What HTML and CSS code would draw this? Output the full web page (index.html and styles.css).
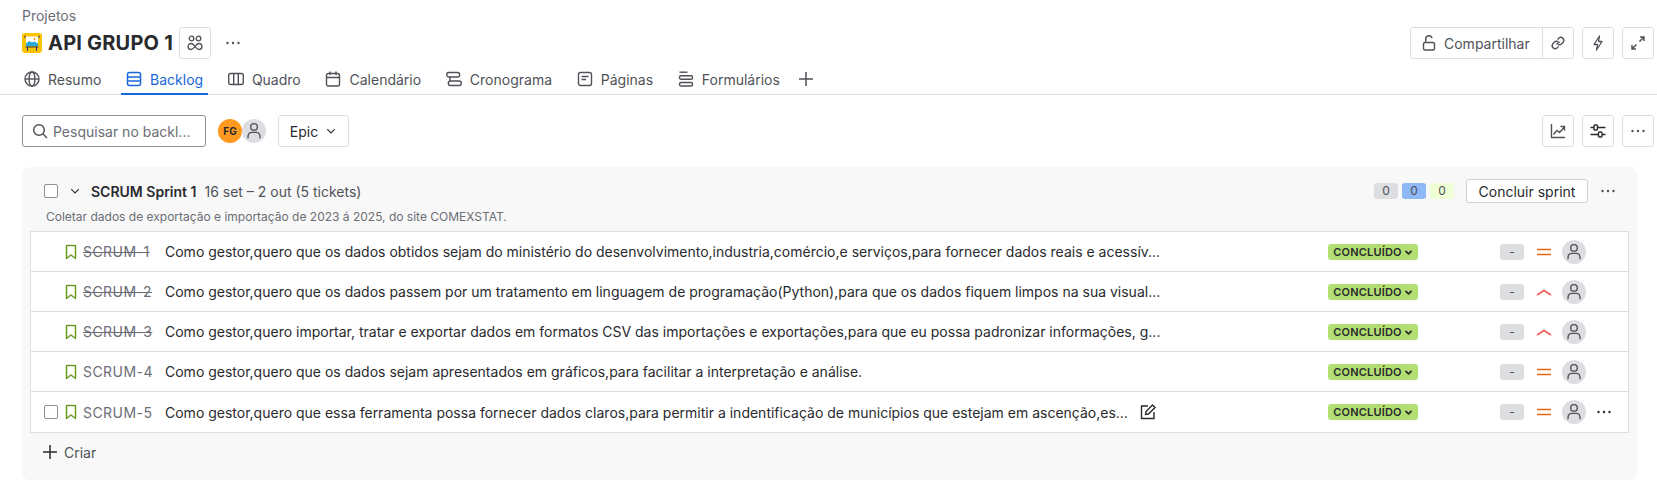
FILE: index.html
```html
<!DOCTYPE html>
<html lang="pt">
<head>
    <meta charset="UTF-8">
    <title>API GRUPO 1 - Backlog</title>
    <link rel="stylesheet" href="styles.css">
</head>
<body>
    <svg class="sprite" width="0" height="0">
        <symbol id="i-person" viewBox="0 0 24 24">
            <circle cx="12" cy="7.500" r="3.600" fill="none" stroke="currentColor" stroke-width="1.500"/>
            <path d="M5.500 20v-2.500a4 4 0 0 1 4-4h5a4 4 0 0 1 4 4V20" fill="none" stroke="currentColor" stroke-width="1.500"/>
        </symbol>
        <symbol id="i-dots" viewBox="0 0 16 16">
            <circle cx="2.500" cy="8" r="1.200" fill="currentColor"/>
            <circle cx="8" cy="8" r="1.200" fill="currentColor"/>
            <circle cx="13.500" cy="8" r="1.200" fill="currentColor"/>
        </symbol>
        <symbol id="i-chevron" viewBox="0 0 16 16">
            <path d="M3 5.500l5 5 5-5" fill="none" stroke="currentColor" stroke-width="1.500"/>
        </symbol>
        <symbol id="i-chevron-bold" viewBox="0 0 16 16">
            <path d="M2.500 5l5.500 5.500L13.500 5" fill="none" stroke="currentColor" stroke-width="3"/>
        </symbol>
        <symbol id="i-bookmark" viewBox="0 0 12 16">
            <path d="M1.500 1.500h9v13L6 11l-4.500 3.500z" fill="none" stroke="currentColor" stroke-width="1.500" stroke-linejoin="round"/>
        </symbol>
        <symbol id="i-equal" viewBox="0 0 16 16">
            <path d="M1 5.500h14M1 10.500h14" fill="none" stroke="#e56910" stroke-width="1.600"/>
        </symbol>
        <symbol id="i-high" viewBox="0 0 16 16">
            <path d="M1 11l7-4.500 7 4.500" fill="none" stroke="#f15b50" stroke-width="1.600"/>
        </symbol>
    </svg>

    <header class="page-head">
        <div class="crumb">Projetos</div>
        <div class="title-row">
            <div class="title-left">
                <svg class="project-icon" viewBox="0 0 20 20">
                    <rect width="20" height="20" rx="3" fill="#ffc400"/>
                    <rect x="4" y="3.500" width="12" height="9.500" fill="#fff"/>
                    <path d="M4 10.500l3-2.500 3 1.500 2-1 4 2v2.500H4z" fill="#2aa7dc"/>
                    <circle cx="12.500" cy="6" r="1" fill="#ff8b00"/>
                    <path d="M3 2.500V5M17 2.500V5M3.500 14h13M5.500 13.500V18M14.500 13.500V18" stroke="#253858" stroke-width="1" fill="none"/>
                </svg>
                <h1 class="title">API GRUPO 1</h1>
                <button class="icon-btn">
                    <svg class="ic" viewBox="0 0 16 16" fill="none" stroke="currentColor" stroke-width="1.300">
                        <circle cx="4.500" cy="3.500" r="2.300"/>
                        <circle cx="11.500" cy="3.500" r="2.300"/>
                        <path d="M4 8.500a3 3 0 1 0 0 6c2 0 3-1.500 4-3s2-3 4-3a3 3 0 1 1 0 6c-2 0-3-1.500-4-3s-2-3-4-3z"/>
                    </svg>
                </button>
                <svg class="ic dots-plain"><use href="#i-dots"/></svg>
            </div>
            <div class="title-actions">
                <div class="share-group">
                    <button class="share-btn">
                        <svg class="ic" viewBox="0 0 16 16" fill="none" stroke="currentColor" stroke-width="1.400">
                            <rect x="2.500" y="7.500" width="11" height="7.500" rx="1.500"/>
                            <path d="M4.700 7.500V4a3.200 3.200 0 0 1 6.300-.8"/>
                        </svg>
                        Compartilhar
                    </button>
                    <button class="share-link">
                        <svg class="ic" viewBox="0 0 16 16" fill="none" stroke="currentColor" stroke-width="1.400">
                            <path d="M6.500 9.500l3-3"/>
                            <path d="M7.500 4.500l1.500-1.500a3 3 0 0 1 4.200 4.200l-1.700 1.700a3 3 0 0 1-3.300.6"/>
                            <path d="M8.500 11.500L7 13a3 3 0 0 1-4.200-4.200l1.700-1.700a3 3 0 0 1 3.300-.6"/>
                        </svg>
                    </button>
                </div>
                <button class="icon-btn">
                    <svg class="ic" viewBox="0 0 16 16" fill="none" stroke="currentColor" stroke-width="1.300" stroke-linejoin="round">
                        <path d="M9.500 1L4 9.500h3.500L6.500 15 12 6.500H8.500z"/>
                    </svg>
                </button>
                <button class="icon-btn">
                    <svg class="ic" viewBox="0 0 16 16" fill="none" stroke="currentColor" stroke-width="1.500">
                        <path d="M10 2h4v4M14 2L9.500 6.500M6 14H2v-4M2 14l4.500-4.500"/>
                    </svg>
                </button>
            </div>
        </div>
        <nav class="tabs">
            <a class="tab">
                <svg class="ic" viewBox="0 0 16 16" fill="none" stroke="currentColor" stroke-width="1.400">
                    <circle cx="8" cy="8" r="7"/>
                    <ellipse cx="8" cy="8" rx="3" ry="7"/>
                    <path d="M1 8h14"/>
                </svg>
                Resumo
            </a>
            <a class="tab tab-active">
                <svg class="ic" viewBox="0 0 16 16" fill="none" stroke="currentColor" stroke-width="1.500">
                    <rect x="1.500" y="1.500" width="13" height="13" rx="2"/>
                    <path d="M1.500 6h13M1.500 10h13"/>
                </svg>
                Backlog
            </a>
            <a class="tab">
                <svg class="ic" viewBox="0 0 16 16" fill="none" stroke="currentColor" stroke-width="1.400">
                    <rect x="0.700" y="2.500" width="14.600" height="11" rx="2"/>
                    <path d="M5.700 2.500v11M10.300 2.500v11"/>
                </svg>
                Quadro
            </a>
            <a class="tab">
                <svg class="ic" viewBox="0 0 16 16" fill="none" stroke="currentColor" stroke-width="1.400">
                    <rect x="1.500" y="2.500" width="13" height="12.500" rx="2"/>
                    <path d="M1.500 6.500h13M5 .5v3.500M11 .5v3.500"/>
                </svg>
                Calendário
            </a>
            <a class="tab">
                <svg class="ic" viewBox="0 0 16 16" fill="none" stroke="currentColor" stroke-width="1.400">
                    <rect x="0.700" y="1.500" width="13" height="4.500" rx="2.200"/>
                    <rect x="2.300" y="10" width="13" height="4.500" rx="2.200"/>
                    <path d="M4 6v4"/>
                </svg>
                Cronograma
            </a>
            <a class="tab">
                <svg class="ic" viewBox="0 0 16 16" fill="none" stroke="currentColor" stroke-width="1.400">
                    <rect x="1.500" y="1.500" width="13" height="13" rx="2"/>
                    <path d="M4.500 5.500h7M4.500 8.500h4.500"/>
                </svg>
                Páginas
            </a>
            <a class="tab">
                <svg class="ic" viewBox="0 0 16 16" fill="none" stroke="currentColor" stroke-width="1.400">
                    <path d="M1.500 1.200h8"/>
                    <rect x="1.500" y="4.800" width="13" height="3.500" rx="1.500"/>
                    <rect x="1.500" y="11.500" width="13" height="3.500" rx="1.500"/>
                </svg>
                Formulários
            </a>
            <svg class="ic tab-plus" viewBox="0 0 16 16" fill="none" stroke="currentColor" stroke-width="1.500">
                <path d="M8 1v14M1 8h14"/>
            </svg>
        </nav>
    </header>

    <section class="toolbar">
        <div class="toolbar-left">
            <label class="search">
                <svg class="ic" viewBox="0 0 16 16" fill="none" stroke="currentColor" stroke-width="1.500">
                    <circle cx="7" cy="7" r="5.300"/>
                    <path d="M11 11l4 4"/>
                </svg>
                <span>Pesquisar no backl...</span>
            </label>
            <div class="avatars">
                <span class="avatar avatar-fg">FG</span>
                <span class="avatar"><svg class="avatar-ic"><use href="#i-person"/></svg></span>
            </div>
            <button class="epic-btn">Epic <svg class="chev"><use href="#i-chevron"/></svg></button>
        </div>
        <div class="toolbar-right">
            <button class="icon-btn">
                <svg class="ic" viewBox="0 0 16 16" fill="none" stroke="currentColor" stroke-width="1.400">
                    <path d="M1.500 1v13.500H15"/>
                    <path d="M3.500 11.500l3.500-4 2.500 2L14 4.500M10.500 3.500h4v4"/>
                </svg>
            </button>
            <button class="icon-btn">
                <svg class="ic filter-ic" viewBox="0 0 16 16" fill="none" stroke="currentColor" stroke-width="1.400">
                    <path d="M0.500 4.500h3.500M7.500 4.500h8M0.500 11.500h8M12 11.500h3.500"/>
                    <rect x="4" y="2" width="3.500" height="5" rx="1"/>
                    <rect x="8.500" y="9" width="3.500" height="5" rx="1"/>
                </svg>
            </button>
            <button class="icon-btn"><svg class="ic"><use href="#i-dots"/></svg></button>
        </div>
    </section>

    <main class="sprint">
        <div class="sprint-head">
            <div class="sprint-title">
                <span class="checkbox"></span>
                <svg class="chev sprint-chev"><use href="#i-chevron"/></svg>
                <strong>SCRUM Sprint 1</strong>
                <span class="sprint-dates">16 set – 2 out (5 tickets)</span>
            </div>
            <div class="sprint-actions">
                <div class="counts">
                    <span class="count">0</span>
                    <span class="count count-blue">0</span>
                    <span class="count count-green">0</span>
                </div>
                <button class="finish-btn">Concluir sprint</button>
                <svg class="ic dots-plain"><use href="#i-dots"/></svg>
            </div>
        </div>
        <p class="sprint-goal">Coletar dados de exportação e importação de 2023 á 2025, do site COMEXSTAT.</p>

        <ul class="issues">
            <li class="issue">
                <span class="check-slot"></span>
                <svg class="bookmark"><use href="#i-bookmark"/></svg>
                <s class="key">SCRUM-1</s>
                <span class="summary">Como gestor,quero que os dados obtidos sejam do ministério do desenvolvimento,industria,comércio,e serviços,para fornecer dados reais e acessív...</span>
                <span class="status">CONCLUÍDO<svg class="status-chev"><use href="#i-chevron-bold"/></svg></span>
                <span class="points">-</span>
                <svg class="priority"><use href="#i-equal"/></svg>
                <span class="avatar"><svg class="avatar-ic"><use href="#i-person"/></svg></span>
            </li>
            <li class="issue">
                <span class="check-slot"></span>
                <svg class="bookmark"><use href="#i-bookmark"/></svg>
                <s class="key">SCRUM-2</s>
                <span class="summary">Como gestor,quero que os dados passem por um tratamento em linguagem de programação(Python),para que os dados fiquem limpos na sua visual...</span>
                <span class="status">CONCLUÍDO<svg class="status-chev"><use href="#i-chevron-bold"/></svg></span>
                <span class="points">-</span>
                <svg class="priority"><use href="#i-high"/></svg>
                <span class="avatar"><svg class="avatar-ic"><use href="#i-person"/></svg></span>
            </li>
            <li class="issue">
                <span class="check-slot"></span>
                <svg class="bookmark"><use href="#i-bookmark"/></svg>
                <s class="key">SCRUM-3</s>
                <span class="summary">Como gestor,quero importar, tratar e exportar dados em formatos CSV das importações e exportações,para que eu possa padronizar informações, g...</span>
                <span class="status">CONCLUÍDO<svg class="status-chev"><use href="#i-chevron-bold"/></svg></span>
                <span class="points">-</span>
                <svg class="priority"><use href="#i-high"/></svg>
                <span class="avatar"><svg class="avatar-ic"><use href="#i-person"/></svg></span>
            </li>
            <li class="issue">
                <span class="check-slot"></span>
                <svg class="bookmark"><use href="#i-bookmark"/></svg>
                <span class="key">SCRUM-4</span>
                <span class="summary">Como gestor,quero que os dados sejam apresentados em gráficos,para facilitar a interpretação e análise.</span>
                <span class="status">CONCLUÍDO<svg class="status-chev"><use href="#i-chevron-bold"/></svg></span>
                <span class="points">-</span>
                <svg class="priority"><use href="#i-equal"/></svg>
                <span class="avatar"><svg class="avatar-ic"><use href="#i-person"/></svg></span>
            </li>
            <li class="issue">
                <span class="check-slot"><span class="checkbox"></span></span>
                <svg class="bookmark"><use href="#i-bookmark"/></svg>
                <span class="key">SCRUM-5</span>
                <span class="summary">Como gestor,quero que essa ferramenta possa fornecer dados claros,para permitir a indentificação de municípios que estejam em ascenção,es...<svg class="ic edit-ic" viewBox="0 0 16 16" fill="none" stroke="currentColor" stroke-width="1.400">
                        <path d="M8 2H1.500v12.500H14V8"/>
                        <path d="M5.500 10.500l.5-3L12.500 1l2.500 2.500L8.500 10z"/>
                    </svg></span>
                <span class="status">CONCLUÍDO<svg class="status-chev"><use href="#i-chevron-bold"/></svg></span>
                <span class="points">-</span>
                <svg class="priority"><use href="#i-equal"/></svg>
                <span class="avatar"><svg class="avatar-ic"><use href="#i-person"/></svg></span>
                <svg class="ic row-dots"><use href="#i-dots"/></svg>
            </li>
        </ul>

        <div class="create">
            <svg class="ic" viewBox="0 0 16 16" fill="none" stroke="currentColor" stroke-width="1.500">
                <path d="M8 1v14M1 8h14"/>
            </svg>
            Criar
        </div>
    </main>
</body>
</html>
```

FILE: styles.css
```css
*{
    margin: 0;
    padding: 0;
    box-sizing: border-box;
    list-style: none;
}
body{
    margin: 0;
    background-color: #fff;
    color: #292a2e;
    font-family: Inter, "Noto Sans", sans-serif;
    font-size: 14px;
    overflow: hidden;
}
button{
    font-family: inherit;
    background: #fff;
    color: inherit;
}
.sprite{
    position: absolute;
}
.ic{
    width: 16px;
    height: 16px;
    flex: none;
    color: #505258;
}

/* cabecalho */
.page-head{
    height: 95px;
    border-bottom: 1px solid #dddee1;
}
.crumb{
    height: 27px;
    padding: 6px 0 0 22px;
    line-height: 20px;
    color: #6b6e76;
}
.title-row{
    display: flex;
    justify-content: space-between;
    height: 32px;
    padding: 0 3px 0 22px;
}
.title-left,.title-actions{
    display: flex;
    align-items: center;
}
.project-icon{
    width: 20px;
    height: 20px;
    margin-right: 6px;
}
.title{
    font-size: 20px;
    font-weight: 700;
    letter-spacing: 0.2px;
    line-height: 32px;
    margin-right: 6px;
}
.icon-btn{
    width: 32px;
    height: 32px;
    border: 1px solid #dddee1;
    border-radius: 3px;
    display: flex;
    align-items: center;
    justify-content: center;
}
.dots-plain{
    margin-left: 14px;
}
.title-actions{
    gap: 8px;
}
.share-group{
    display: flex;
    height: 32px;
    border: 1px solid #dddee1;
    border-radius: 3px;
}
.share-btn{
    display: flex;
    align-items: center;
    gap: 7px;
    width: 132px;
    padding-left: 10px;
    border: none;
    border-right: 1px solid #dddee1;
    font-size: 14px;
    color: #505258;
    background: none;
}
.share-link{
    width: 30px;
    border: none;
    display: flex;
    align-items: center;
    justify-content: center;
    background: none;
}

/* abas */
.tabs{
    display: flex;
    align-items: center;
    gap: 14.75px;
    height: 35px;
    padding: 1px 0 0 19px;
}
.tab{
    display: flex;
    align-items: center;
    gap: 8px;
    height: 34px;
    padding: 4px 5px 0;
    color: #505258;
    position: relative;
}
.tab-active{
    color: #1868db;
}
.tab-active .ic{
    color: #1868db;
}
.tab-active::after{
    content: "";
    position: absolute;
    left: 0;
    right: 0;
    bottom: -1px;
    height: 2px;
    background-color: #1868db;
}
.tab-plus{
    margin: 4px 0 0 -2px;
}

/* barra de filtros */
.toolbar{
    display: flex;
    justify-content: space-between;
    align-items: center;
    height: 32px;
    margin-top: 20px;
    padding: 0 3px 0 22px;
}
.toolbar-left,.toolbar-right{
    display: flex;
    align-items: center;
    gap: 8px;
}
.search{
    width: 184px;
    height: 32px;
    display: flex;
    align-items: center;
    gap: 5px;
    padding-left: 9px;
    border: 1px solid #8c8f97;
    border-radius: 3px;
    color: #6b6e76;
}
.avatars{
    display: flex;
    margin: 0 4px;
}
.avatar{
    width: 24px;
    height: 24px;
    border-radius: 50%;
    flex: none;
    background-color: #dddee1;
    display: flex;
    align-items: center;
    justify-content: center;
}
.avatar-fg{
    background-color: #ff991f;
    color: #292a2e;
    font-size: 10px;
    font-weight: 700;
}
.avatar-ic{
    width: 22px;
    height: 22px;
    color: #505258;
}
.epic-btn{
    height: 32px;
    width: 71px;
    display: flex;
    align-items: center;
    justify-content: center;
    gap: 7px;
    border: 1px solid #dddee1;
    border-radius: 3px;
    font-size: 14px;
}
.chev{
    width: 12px;
    height: 12px;
    color: #292a2e;
}
.filter-ic{
    color: #292a2e;
}

/* sprint */
.sprint{
    margin: 20px 20px 0 22px;
    height: 313px;
    padding: 12px 8px 0;
    background-color: #f8f8f8;
    border-radius: 8px;
}
.sprint-head{
    display: flex;
    justify-content: space-between;
    align-items: center;
    height: 24px;
    padding: 0 13px 0 14px;
}
.sprint-title{
    display: flex;
    align-items: center;
}
.checkbox{
    width: 14px;
    height: 14px;
    display: block;
    border: 1px solid #8c8f97;
    border-radius: 2px;
    background-color: #fff;
}
.sprint-chev{
    margin: 0 10px 0 11px;
}
.sprint-title strong{
    font-weight: 600;
}
.sprint-dates{
    margin-left: 8px;
    color: #505258;
    font-size: 14px;
}
.sprint-actions{
    display: flex;
    align-items: center;
}
.counts{
    display: flex;
    gap: 4px;
}
.count{
    width: 24px;
    height: 16px;
    border-radius: 3px;
    background-color: #dddee1;
    color: #505258;
    font-size: 12px;
    line-height: 16px;
    text-align: center;
}
.count-blue{
    background-color: #8fb8f6;
}
.count-green{
    background-color: #efffd6;
}
.finish-btn{
    width: 122px;
    height: 24px;
    margin-left: 12px;
    border: 1px solid #cfd0d4;
    border-radius: 3px;
    font-size: 14px;
}
.sprint-actions .dots-plain{
    margin-left: 12px;
}
.sprint-goal{
    height: 16px;
    margin-top: 6px;
    padding-left: 16px;
    font-size: 12px;
    line-height: 16px;
    color: #6b6e76;
}

/* lista de tickets */
.issues{
    margin-top: 6px;
    border: 1px solid #dddee1;
    background-color: #fff;
}
.issue{
    display: flex;
    align-items: center;
    height: 40px;
    border-bottom: 1px solid #dddee1;
}
.issue:last-child{
    border-bottom: none;
}
.check-slot{
    width: 35px;
    padding-left: 13px;
    flex: none;
}
.bookmark{
    width: 12px;
    height: 16px;
    margin-left: -1px;
    flex: none;
    color: #6a9a23;
}
.key{
    width: 82px;
    margin-left: 6px;
    flex: none;
    color: #6b6e76;
    font-size: 14px;
    letter-spacing: 0.45px;
}
.summary{
    width: 995px;
    flex: none;
    display: flex;
    align-items: center;
    white-space: nowrap;
}
.edit-ic{
    margin-left: 12px;
    color: #292a2e;
}
.status{
    display: flex;
    align-items: center;
    justify-content: center;
    gap: 2px;
    width: 90px;
    height: 16px;
    margin-left: 168px;
    flex: none;
    border-radius: 3px;
    background-color: #b3df72;
    font-size: 11px;
    font-weight: 600;
    letter-spacing: 0.2px;
    color: #292a2e;
}
.status-chev{
    width: 9px;
    height: 9px;
    margin-top: 1px;
}
.points{
    width: 24px;
    height: 16px;
    margin-left: 82px;
    flex: none;
    border-radius: 3px;
    background-color: #dddee1;
    color: #505258;
    font-size: 12px;
    line-height: 16px;
    text-align: center;
}
.priority{
    width: 16px;
    height: 16px;
    margin: 0 10px 0 12px;
    flex: none;
}
.row-dots{
    margin-left: 10px;
    color: #292a2e;
}
.create{
    display: flex;
    align-items: center;
    gap: 6px;
    height: 38px;
    padding-left: 12px;
    color: #505258;
}
.create .ic{
    color: #292a2e;
}
```
